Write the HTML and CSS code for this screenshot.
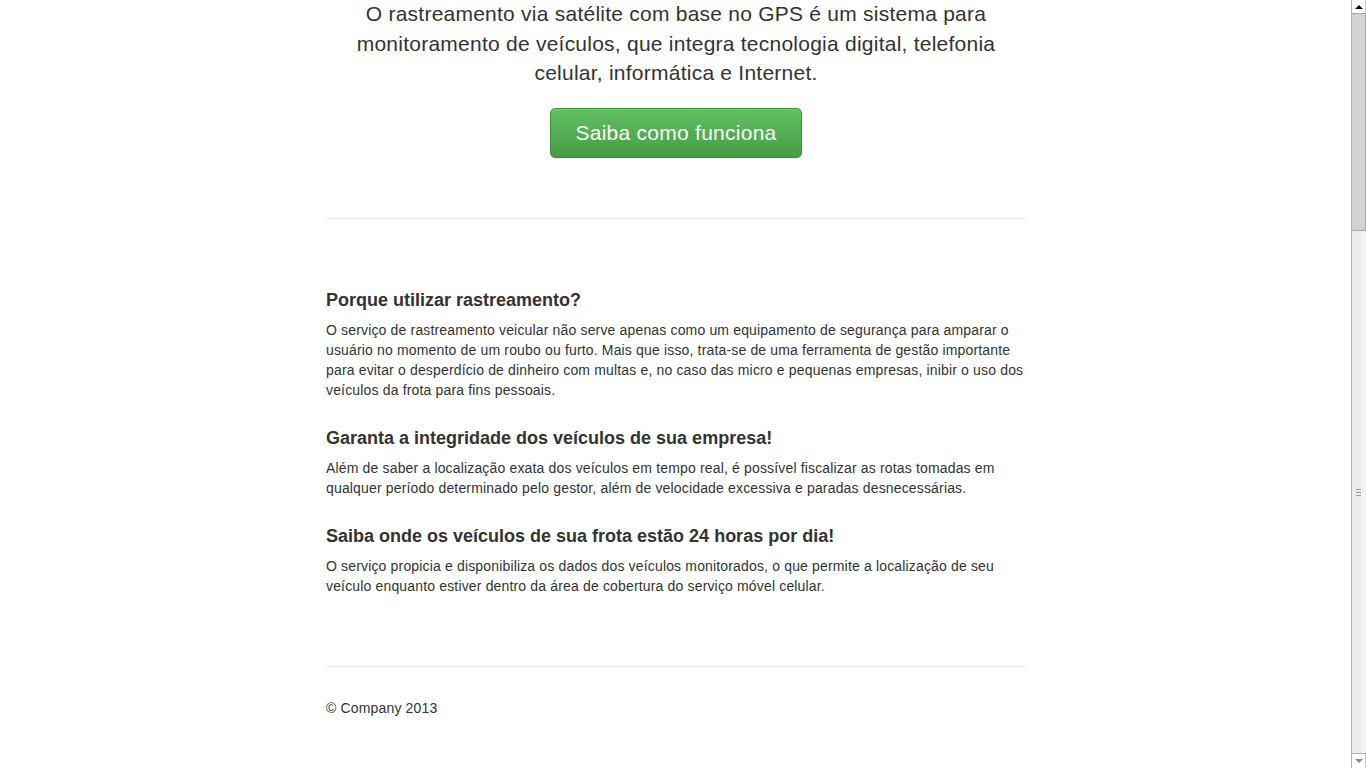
FILE: index.html
```html
<!DOCTYPE html>
<html lang="pt">
<head>
<meta charset="utf-8">
<title>Rastreamento</title>
<link rel="stylesheet" href="styles.css">
</head>
<body>
<div class="page">
  <div class="container">
    <div class="jumbotron">
      <p class="lead">O rastreamento via satélite com base no GPS é um sistema para monitoramento de veículos, que integra tecnologia digital, telefonia celular, informática e Internet.</p>
      <p class="cta"><a class="btn" href="#">Saiba como funciona</a></p>
    </div>
    <div class="marketing">
      <h4>Porque utilizar rastreamento?</h4>
      <p>O serviço de rastreamento veicular não serve apenas como um equipamento de segurança para amparar o usuário no momento de um roubo ou furto. Mais que isso, trata-se de uma ferramenta de gestão importante para evitar o desperdício de dinheiro com multas e, no caso das micro e pequenas empresas, inibir o uso dos veículos da frota para fins pessoais.</p>
      <h4>Garanta a integridade dos veículos de sua empresa!</h4>
      <p>Além de saber a localização exata dos veículos em tempo real, é possível fiscalizar as rotas tomadas em qualquer período determinado pelo gestor, além de velocidade excessiva e paradas desnecessárias.</p>
      <h4>Saiba onde os veículos de sua frota estão 24 horas por dia!</h4>
      <p>O serviço propicia e disponibiliza os dados dos veículos monitorados, o que permite a localização de seu veículo enquanto estiver dentro da área de cobertura do serviço móvel celular.</p>
    </div>
    <div class="footer">
      <p>© Company 2013</p>
    </div>
  </div>
</div>
<div class="scrollbar">
  <div class="sb-btn sb-up"><span class="tri-up"></span></div>
  <div class="sb-thumb"></div>
  <div class="sb-track">
    <div class="sb-grip"><i></i><i></i><i></i></div>
  </div>
  <div class="sb-btn sb-down"><span class="tri-down"></span></div>
</div>
</body>
</html>
```
FILE: styles.css
```css
html, body {
  margin: 0;
  padding: 0;
  height: 100%;
}
body {
  display: flex;
  overflow: hidden;
  background: #fff;
  font-family: "Liberation Sans", Arial, Helvetica, sans-serif;
  font-size: 14px;
  line-height: 20px;
  letter-spacing: 0.16px;
  color: #333;
}
.page {
  flex: 1;
  min-width: 0;
  padding-left: 1px;
}
.container {
  width: 700px;
  margin: 0 auto;
}
.jumbotron {
  margin-top: -1px;
  text-align: center;
  border-bottom: 1px solid #e5e5e5;
  padding-bottom: 45px;
}
.lead {
  margin: 0 0 20px;
  font-size: 21px;
  line-height: 29.5px;
  letter-spacing: 0.24px;
  font-weight: 300;
  padding: 0 20px;
}
.cta {
  margin: 0 0 15px;
}
.btn {
  display: inline-block;
  box-sizing: border-box;
  height: 50px;
  padding: 10px 24px;
  font-size: 21px;
  line-height: 28px;
  letter-spacing: 0.26px;
  color: #fff;
  text-decoration: none;
  border: 1px solid #3e8f3e;
  border-radius: 5px;
  background: linear-gradient(to bottom, #62c062 0%, #459d45 100%);
  box-shadow: inset 0 1px 0 rgba(255,255,255,.15), 0 1px 1px rgba(0,0,0,.075);
}
.marketing {
  padding-top: 71px;
  padding-bottom: 70px;
}
.marketing h4 {
  margin: 0 0 10px;
  font-size: 18px;
  line-height: 20px;
  letter-spacing: 0;
  font-weight: bold;
  color: #333;
}
.marketing p {
  margin: 0 0 10px;
}
.marketing p + h4 {
  margin-top: 28px;
}
.marketing p:last-child {
  margin-bottom: 0;
}
.footer {
  border-top: 1px solid #e5e5e5;
  padding-top: 31px;
}
.footer p {
  margin: 0;
}

/* scrollbar */
.scrollbar {
  width: 15px;
  flex: none;
  display: flex;
  flex-direction: column;
  box-sizing: border-box;
  border-left: 1px solid #b4b4b4;
  background: linear-gradient(to right, #ececec 0, #ececec 9px, #f4f4f4 9px);
}
.sb-btn {
  height: 14px;
  flex: none;
  background: #fff;
  display: flex;
  align-items: center;
  justify-content: center;
  box-sizing: border-box;
}
.sb-up {
  border-bottom: 1px solid #a8a8a8;
  border-right: 1px solid #c8c8c8;
}
.sb-down {
  height: 15px;
  border-top: 1px solid #b4b4b4;
  border-right: 1px solid #c8c8c8;
}
.tri-up {
  width: 0; height: 0;
  border-left: 4px solid transparent;
  border-right: 4px solid transparent;
  border-bottom: 4px solid #000;
}
.tri-down {
  width: 0; height: 0;
  border-left: 4px solid transparent;
  border-right: 4px solid transparent;
  border-top: 4px solid #8a8a8a;
}
.sb-thumb {
  height: 217px;
  flex: none;
  box-sizing: border-box;
  background: #d2d2d2;
  border-right: 1px solid #a8a8a8;
  border-bottom: 1px solid #a8a8a8;
}
.sb-track {
  flex: 1;
  display: flex;
  align-items: center;
  justify-content: center;
  padding-left: 1px;
}
.sb-grip {
  display: flex;
  flex-direction: column;
  gap: 2px;
  margin-right: 2px;
}
.sb-grip i {
  display: block;
  width: 5px;
  height: 1px;
  background: #9a9a9a;
}
```
